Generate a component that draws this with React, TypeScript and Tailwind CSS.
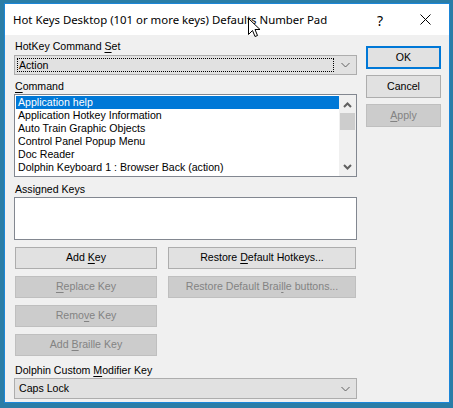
import React from 'react';

const font = { fontFamily: '"Liberation Sans", Arial, sans-serif' };

const U: React.FC<{ children: React.ReactNode }> = ({ children }) => <span className="underline underline-offset-[1.5px]">{children}</span>;

const Chevron: React.FC<{ up?: boolean; className?: string }> = ({ up, className }) => (
  <svg width="9" height="6" viewBox="0 0 9 6" className={className}>
    <path d={up ? 'M0.5 5 L4.5 1 L8.5 5' : 'M0.5 1 L4.5 5 L8.5 1'} fill="none" stroke="currentColor" strokeWidth="1" />
  </svg>
);

const ScrollChevron: React.FC<{ up?: boolean }> = ({ up }) => (
  <svg width="9" height="6" viewBox="0 0 9 6">
    <path d={up ? 'M1 5 L4.5 1.5 L8 5' : 'M1 1 L4.5 4.5 L8 1'} fill="none" stroke="#606060" strokeWidth="2" />
  </svg>
);

const Btn: React.FC<{ children: React.ReactNode; disabled?: boolean; className?: string }> = ({ children, disabled, className = '' }) => (
  <div
    className={`flex items-center justify-center h-[22px] border ${
      disabled ? 'bg-[#cccccc] border-[#bfbfbf] text-[#838383]' : 'bg-[#e1e1e1] border-[#adadad] text-black'
    } ${className}`}
  >
    <span>{children}</span>
  </div>
);

const commands = [
  'Application help',
  'Application Hotkey Information',
  'Auto Train Graphic Objects',
  'Control Panel Popup Menu',
  'Doc Reader',
  'Dolphin Keyboard 1 : Browser Back (action)',
];

export default function App() {
  return (
    <div className="w-[453px] h-[408px] bg-[#2a7da7] pl-[4px] pt-[3px] relative" style={font}>
      <div className="w-[446px] h-[400px] border border-[#1b86d8] bg-[#f0f0f0] flex flex-col">
        {/* title bar */}
        <div className="h-[31px] bg-white flex items-center pl-[8px] text-[11.4px] text-black shrink-0 relative">
          <span style={{ fontFamily: '"Noto Sans", "Liberation Sans", sans-serif' }}>
            Hot Keys Desktop (101 or more keys) Defaults Number Pad
          </span>
          <span className="absolute left-[372px] top-[6px] text-[14px]" style={{ fontFamily: '"Noto Sans", sans-serif' }}>?</span>
          <svg className="absolute left-[415px] top-[10px]" width="11" height="11" viewBox="0 0 11 11">
            <path d="M0.5 0.5 L10.5 10.5 M10.5 0.5 L0.5 10.5" stroke="#000" strokeWidth="1" />
          </svg>
        </div>

        <div className="flex pl-[9px] text-[10.6px]">
          {/* left column */}
          <div className="w-[343px] flex flex-col text-black">
            <div className="h-[13px] leading-[13px] mt-[5px] pl-[1px]">
              HotKey Command <U>S</U>et
            </div>
            <div className="h-[20px] mt-[2px] bg-[#e1e1e1] border border-[#adadad] flex items-center pl-[2px] pr-[6px]">
              <div className="flex-1 h-[14px] border border-dotted border-black flex items-center pl-[1px] leading-[12px]">Action</div>
              <Chevron className="ml-[7px] text-[#606060]" />
            </div>

            <div className="h-[13px] leading-[13px] mt-[5px] pl-[1px]">
              <U>C</U>ommand
            </div>
            <div className="h-[83px] mt-[1px] bg-white border border-[#828790] flex">
              <div className="flex-1 pt-[1px] pl-[1px]">
                {commands.map((c, i) => (
                  <div
                    key={c}
                    className={`h-[13px] leading-[13px] pl-[2px] whitespace-nowrap ${i === 0 ? 'bg-[#0078d7] text-white' : ''}`}
                  >
                    {c}
                  </div>
                ))}
              </div>
              <div className="w-[17px] bg-[#f0f0f0] flex flex-col items-center">
                <div className="h-[17px] flex items-center justify-center mt-[1px]">
                  <ScrollChevron up />
                </div>
                <div className="w-[15px] h-[17px] bg-[#cdcdcd]" />
                <div className="flex-1" />
                <div className="h-[17px] flex items-center justify-center mb-[1px]">
                  <ScrollChevron />
                </div>
              </div>
            </div>

            <div className="h-[13px] leading-[13px] mt-[6px] pl-[1px]">Assigned Keys</div>
            <div className="h-[43px] mt-[1px] bg-white border border-[#828790]" />

            <div className="flex mt-[7px] gap-[11px] pl-[1px] pr-[1px]">
              <div className="w-[142px] flex flex-col gap-[7px]">
                <Btn>
                  Add <U>K</U>ey
                </Btn>
                <Btn disabled>
                  <U>R</U>eplace Key
                </Btn>
                <Btn disabled>
                  Remo<U>v</U>e Key
                </Btn>
                <Btn disabled>
                  Add <U>B</U>raille Key
                </Btn>
              </div>
              <div className="flex-1 flex flex-col gap-[7px]">
                <Btn>
                  Restore <U>D</U>efault Hotkeys...
                </Btn>
                <Btn disabled>
                  Restore Default Brai<U>l</U>le buttons...
                </Btn>
              </div>
            </div>

            <div className="h-[13px] leading-[13px] mt-[8px] pl-[1px]">
              Dolphin Custom <U>M</U>odifier Key
            </div>
            <div className="h-[21px] mt-[1px] bg-[#e1e1e1] border border-[#adadad] flex items-center pl-[4px] pr-[6px]">
              <div className="flex-1">Caps Lock</div>
              <Chevron className="text-[#606060]" />
            </div>
          </div>

          {/* right column */}
          <div className="w-[75px] ml-[9px] flex flex-col gap-[6px] mt-[11px]">
            <div className="h-[23px] flex items-center justify-center bg-[#e1e1e1] border-2 border-[#0078d7]">OK</div>
            <Btn className="h-[23px]">Cancel</Btn>
            <Btn disabled className="h-[23px]">
              <U>A</U>pply
            </Btn>
          </div>
        </div>
      </div>

      {/* mouse cursor */}
      <svg className="absolute left-[248px] top-[18px]" width="13" height="20" viewBox="0 0 13 20">
        <path d="M0.5 0.5 L0.5 16.5 L4.5 12.5 L7 18.5 L9.5 17.5 L7 11.5 L12 11.5 Z" fill="#fff" stroke="#000" strokeWidth="1" />
      </svg>
    </div>
  );
}
